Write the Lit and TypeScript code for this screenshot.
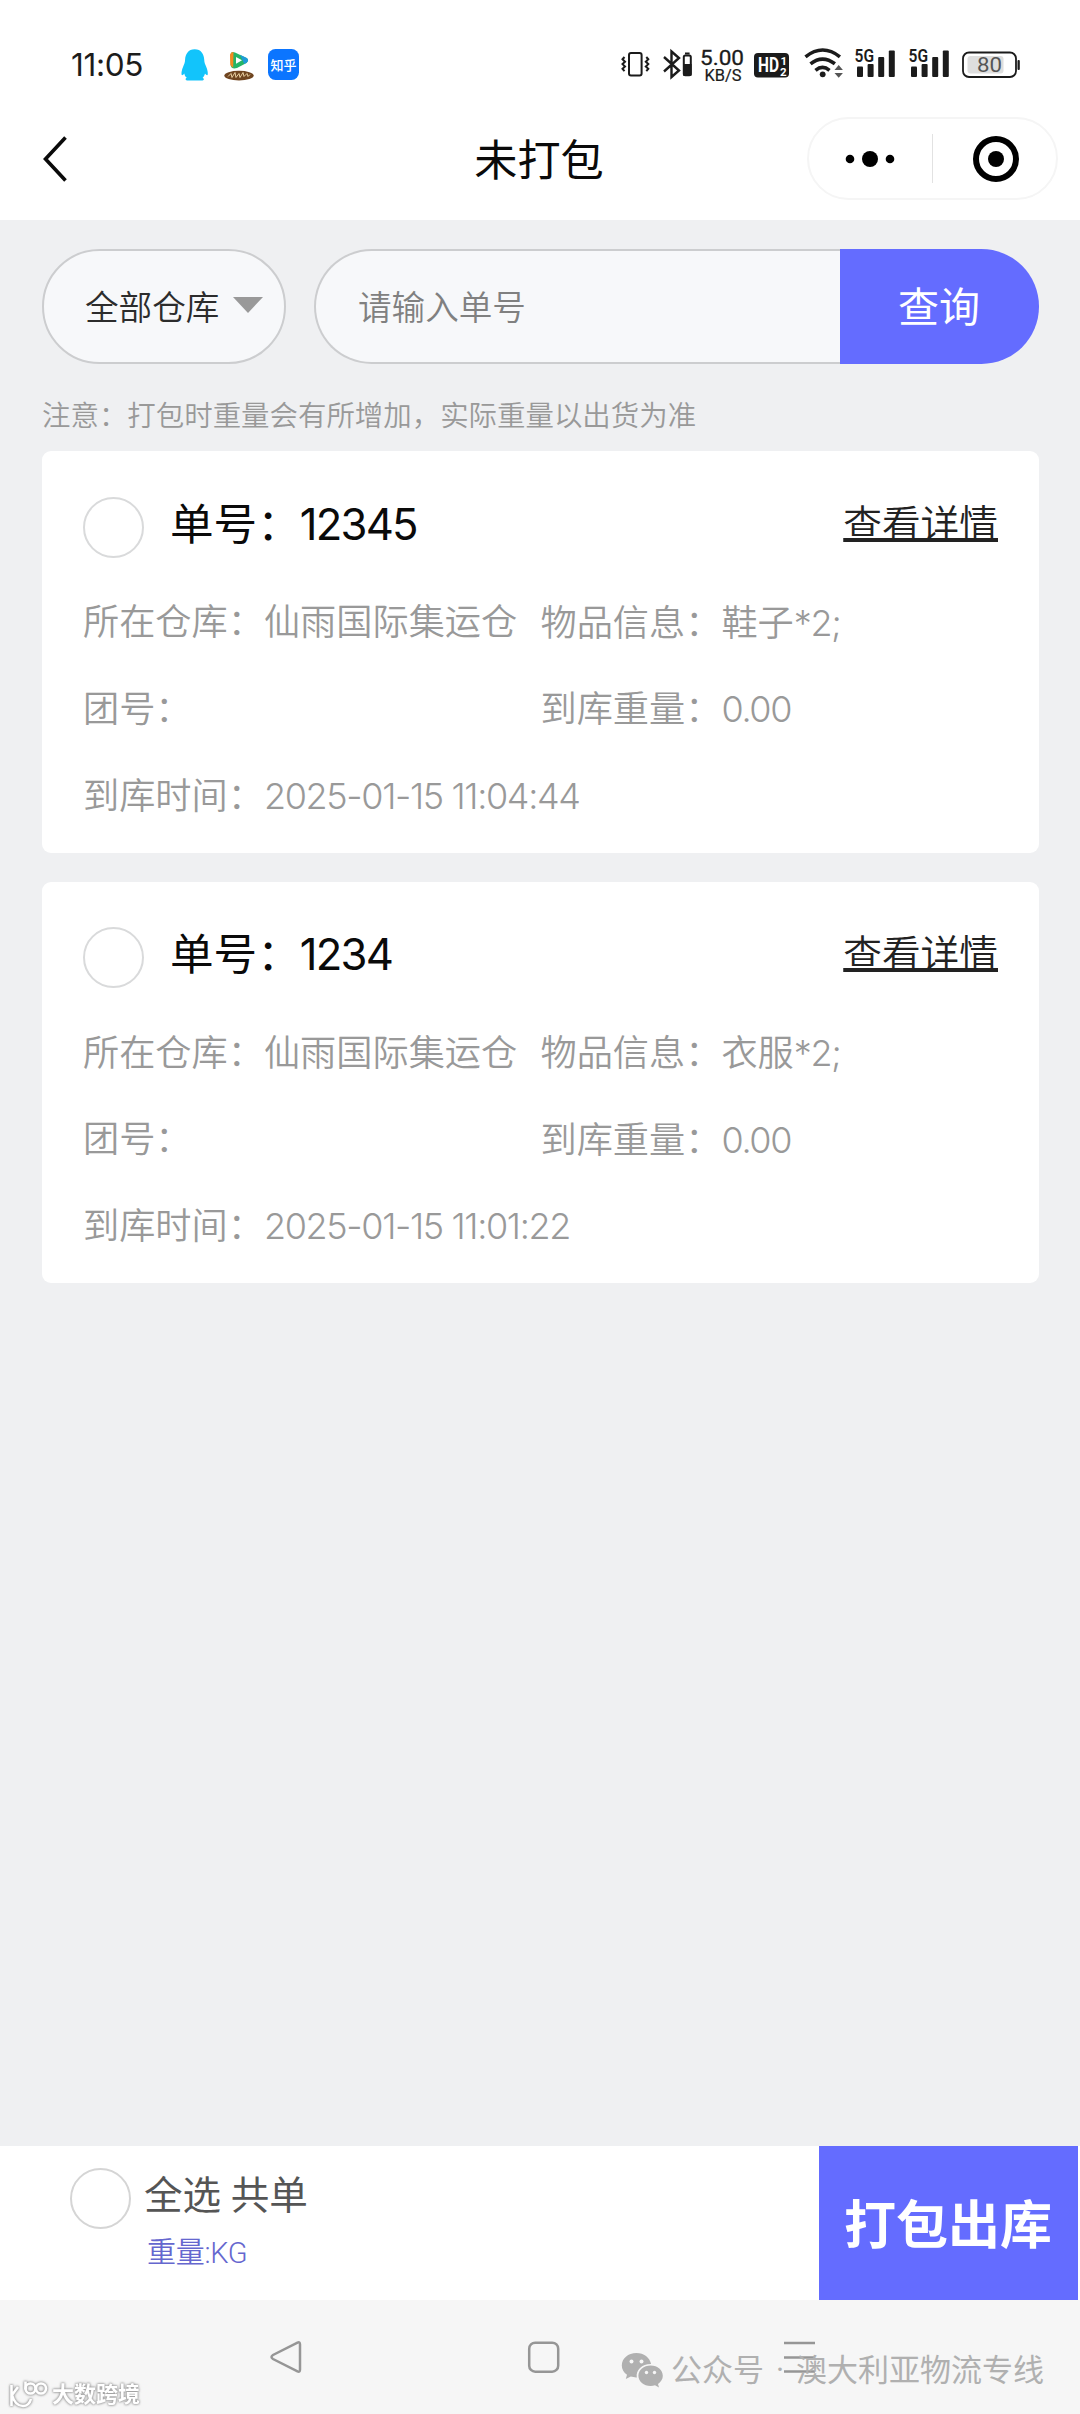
import { LitElement, html, svg, css } from "lit";
import { customElement, property } from "lit/decorators.js";

interface Parcel {
  no: string;
  warehouse: string;
  goods: string;
  group: string;
  weight: string;
  time: string;
}

const PARCELS: Parcel[] = [
  { no: "12345", warehouse: "仙雨国际集运仓", goods: "鞋子*2;", group: "", weight: "0.00", time: "2025-01-15 11:04:44" },
  { no: "1234", warehouse: "仙雨国际集运仓", goods: "衣服*2;", group: "", weight: "0.00", time: "2025-01-15 11:01:22" },
];

@customElement("status-bar")
class StatusBar extends LitElement {
  static styles = css`
    :host { display: flex; height: 98px; box-sizing: border-box; padding: 40px 55px 0 70px; align-items: flex-start; justify-content: space-between; }
    .left { display: flex; align-items: center; height: 50px; }
    .time { width: 110px; padding-left: 1px; font-family: Inter, Roboto, sans-serif; font-size: 31.500px; font-weight: 400; line-height: 52px; color: #1c1c1c; letter-spacing: -.300px; }
    svg { display: block; }
    text { font-family: Roboto, "Liberation Sans", sans-serif; }
    .zh { font-family: "Noto Sans CJK SC", sans-serif; }
  `;

  private signal(x: number) {
    return svg`<g transform="translate(${x} 0)" fill="#1b1b1b">
      <text x="-0.5" y="62" font-size="18.500" font-weight="600" textLength="19.500" lengthAdjust="spacingAndGlyphs">5G</text>
      <rect x="2" y="66.500" width="6" height="10.500" rx="1"/>
      <rect x="12.600" y="64" width="6" height="13" rx="1"/>
      <rect x="23.200" y="57" width="6" height="20" rx="1"/>
      <rect x="33.800" y="50.500" width="6" height="26.500" rx="1"/>
    </g>`;
  }

  render() {
    return html`
      <div class="left">
        <span class="time">11:05</span>
        <svg width="120" height="50" viewBox="181 40 120 50">
          <path fill="#12c4fb" d="M194.700 49.300c-6.500 0-9.300 5-9.600 10.200-.1 3-.8 4.500-2 7.200-1.300 3-1.900 6-1.500 8 .4 1 1.600.2 2.700-1.200.4 2.300 1.300 3.300 2.500 4.300-1.600.5-1.700 2.600.2 2.600h15.500c2 0 1.600-2.100.1-2.700 1.100-1 2-2.200 2.400-4.200 1.200 1.400 2.300 2.200 2.700 1.200.4-2-.2-5-1.500-8-1.200-2.700-1.900-4.200-2-7.200-.300-5.200-3-10.200-9.500-10.200z"/>
          <path fill="#25b566" d="M230.500 54.500q.6-3.500 4.500-2l11.500 5.500q3 2 0 5l-9.500 5q-5.500 1.500-6.300-2.500z"/>
          <path fill="#f48a21" d="M230 55q.8-3.200 3.500-3l-.3 15.800q-2.400-.8-2.900-3.500z"/>
          <path fill="#1e9bd8" d="M240 54.700l6.800 3.300q2.600 2.200 0 4.600l-2.500 1.400z"/>
          <path fill="#fff" d="M236 57l6 3.300-6 3.500z"/>
          <ellipse cx="239" cy="75.600" rx="14.700" ry="4.900" fill="#6f4520"/>
          <path d="M228 76.500l3-3 1 4 3-5 1 5 3-4 1 4 3-5 1 4 3-3 1 3 2-2" fill="none" stroke="#e8cfa0" stroke-width="1"/>
          <rect x="268" y="49" width="31" height="31" rx="7.500" fill="#0b75ff"/>
          <text class="zh" x="283.500" y="69.500" font-size="13" font-weight="500" fill="#fff" text-anchor="middle">知乎</text>
        </svg>
      </div>
      <svg width="405" height="50" viewBox="620 40 405 50">
        <g fill="none" stroke="#1b1b1b" stroke-width="2">
          <rect x="629" y="53" width="12.600" height="22.500" rx="2"/>
          <path stroke-width="2" d="M624.500 57l-2 2.300 2.500 2.400-2.500 2.400 2.500 2.400-2.500 2.400 2 2.300M646.300 57l2 2.300-2.500 2.400 2.500 2.400-2.500 2.400 2.500 2.400-2 2.300"/>
          <path stroke-width="2.400" d="M664 57l15 13.500-7.500 6.500v-25.500l7.500 6.500-15 13.500"/>
          <rect x="683.800" y="55.600" width="7" height="19.600" rx="1.500"/>
        </g>
        <path fill="#1b1b1b" d="M683 64h8.600v11.500h-8.600zM685 52.600h4.600v2h-4.600z"/>
        <g fill="#1b1b1b">
          <text x="700" y="65" font-size="20.500" font-weight="400" stroke="#1b1b1b" stroke-width=".3" textLength="44" lengthAdjust="spacingAndGlyphs">5.00</text>
          <text x="704.500" y="81.300" font-size="16" font-weight="400" stroke="#1b1b1b" stroke-width=".2" textLength="37" lengthAdjust="spacingAndGlyphs">KB/S</text>
        </g>
        <rect x="754" y="53" width="35" height="24.500" rx="4" fill="#1b1b1b"/>
        <g fill="#fff" font-weight="700">
          <text x="758" y="72" font-size="19.500" textLength="21" lengthAdjust="spacingAndGlyphs">HD</text>
          <text x="780.500" y="64.500" font-size="11.500">1</text>
          <text x="780" y="75.500" font-size="11.500">2</text>
        </g>
        <g fill="none" stroke="#1b1b1b" stroke-width="3.600">
          <path d="M805.500 56.800q17.200-13.600 34.400 0"/>
          <path d="M810.500 63.800q12-9.500 24.400 0"/>
          <path d="M815.500 70.300q7-5.800 14 0"/>
        </g>
        <circle cx="822.700" cy="74.300" r="2.900" fill="#1b1b1b"/>
        <path fill="#555" d="M834.500 70l4.200-5 4.200 5zM834.500 73l4.200 4.800 4.200-4.800z"/>
        ${this.signal(855)} ${this.signal(909)}
        <rect x="963" y="52.500" width="53" height="24.500" rx="6" fill="#fff" stroke="#1b1b1b" stroke-width="1.800"/>
        <rect x="967.500" y="56" width="36" height="17.500" rx="3" fill="#dedede"/>
        <text x="977" y="72" font-size="21" font-weight="400" fill="#555" textLength="25" lengthAdjust="spacingAndGlyphs">80</text>
        <rect x="1017.500" y="60" width="2.300" height="10" rx="1" fill="#1b1b1b"/>
      </svg>
    `;
  }
}

@customElement("title-bar")
class TitleBar extends LitElement {
  static styles = css`
    :host { display: grid; grid-template-columns: 1fr auto 1fr; align-items: center; height: 122px; box-sizing: border-box; padding: 0 22px 1px 40px; color: #0a0a0a; }
    .title { font-size: 43.200px; font-weight: 400; line-height: 60px; padding: 6px 20px 0 0; }
    .capsule { justify-self: end; display: flex; align-items: center; width: 251px; height: 83px; box-sizing: border-box; border: 2px solid #f5f5f5; border-radius: 42px; }
    .half { flex: 1; display: flex; align-items: center; justify-content: center; }
    .left-half { padding-right: 2px; }
    .right-half { padding-left: 2px; }
    .split { width: 1px; height: 49px; background: #e2e2e2; }
    svg { display: block; }
  `;

  render() {
    return html`
      <svg width="30" height="50" viewBox="0 0 30 50"><path d="M25.500 3.500L5.500 25l20 21.500" fill="none" stroke="#0a0a0a" stroke-width="3.600"/></svg>
      <div class="title">未打包</div>
      <div class="capsule">
        <div class="half left-half"><svg width="50" height="18" viewBox="0 0 50 18"><circle cx="5" cy="9" r="4.300"/><circle cx="25" cy="9" r="8"/><circle cx="45" cy="9" r="4.300"/></svg></div>
        <div class="split"></div>
        <div class="half right-half"><svg width="48" height="48" viewBox="0 0 48 48"><circle cx="24" cy="24" r="20" fill="none" stroke="#000" stroke-width="6"/><circle cx="24" cy="24" r="8"/></svg></div>
      </div>
    `;
  }
}

@customElement("search-row")
class SearchRow extends LitElement {
  static styles = css`
    :host { display: flex; gap: 28px; height: 115px; }
    .select, .input { box-sizing: border-box; border: 2px solid #cccdcf; background: #f7f8fa; display: flex; align-items: center; font-size: 33.600px; padding-bottom: 3px; }
    .select { width: 244px; border-radius: 58px; padding-left: 41px; gap: 14px; color: #2c2c2c; }
    .arrow { width: 0; height: 0; border: 15.500px solid transparent; border-top: 16px solid #999; border-bottom: 0; }
    .field { flex: 1; display: flex; }
    .input { flex: 1; border-right: 0; border-radius: 58px 0 0 58px; padding-left: 42px; color: #808080; }
    .go { width: 199px; box-sizing: border-box; padding: 0 1px 6px 0; border-radius: 0 58px 58px 0; background: #646cff; color: #fff; font-size: 41px; font-weight: 400; display: flex; align-items: center; justify-content: center; }
  `;

  render() {
    return html`
      <div class="select"><span>全部仓库</span><i class="arrow"></i></div>
      <div class="field">
        <div class="input">请输入单号</div>
        <div class="go">查询</div>
      </div>
    `;
  }
}

@customElement("parcel-card")
class ParcelCard extends LitElement {
  @property({ attribute: false }) parcel!: Parcel;

  static styles = css`
    :host { display: block; box-sizing: border-box; height: 401.500px; padding: 45px 41px 0; border-radius: 9px; background: #fff; }
    .head { display: flex; align-items: center; height: 62px; }
    .check { width: 61px; height: 61px; box-sizing: border-box; border: 2px solid #d9dadb; border-radius: 50%; }
    .no { margin: 0 0 3px 26px; flex: 1; font-size: 43.600px; font-weight: 400; line-height: 60px; color: #0a0a0a; display: flex; }
    .digits, .latin { font-family: Inter, Roboto, sans-serif; }
    .digits { letter-spacing: -1.800px; margin: -1px 0 0 -1px; font-weight: 400; }
    .link { margin-bottom: 5px; font-size: 38.700px; line-height: 56px; color: #222; text-decoration: underline; text-decoration-thickness: 3.500px; text-underline-offset: 0; text-decoration-skip-ink: none; }
    .grid { display: grid; grid-template-columns: 457.500px 1fr; grid-auto-rows: 86.500px; align-items: center; margin-top: 22px; font-size: 36.200px; line-height: 52px; color: #999; }
    .wide { grid-column: 1 / -1; }
    .latin { font-size: 36px; letter-spacing: -1.350px; }
  `;

  render() {
    const p = this.parcel;
    const goods = p.goods.replace(/\*.*$/, "");
    const count = p.goods.slice(goods.length);
    return html`
      <div class="head">
        <span class="check"></span>
        <div class="no"><span>单号：</span><span class="digits">${p.no}</span></div>
        <span class="link">查看详情</span>
      </div>
      <div class="grid">
        <div>所在仓库：${p.warehouse}</div>
        <div>物品信息：${goods}<span class="latin">${count}</span></div>
        <div>团号：${p.group}</div>
        <div>到库重量：<span class="latin">${p.weight}</span></div>
        <div class="wide">到库时间：<span class="latin">${p.time}</span></div>
      </div>
    `;
  }
}

@customElement("pack-bar")
class PackBar extends LitElement {
  static styles = css`
    :host { display: flex; height: 154px; box-sizing: border-box; padding: 0 2px 0 70px; background: #fff; }
    .check { width: 61px; height: 61px; margin-top: 22px; box-sizing: border-box; border: 2px solid #d5d5d5; border-radius: 50%; }
    .info { flex: 1; padding: 22px 0 0 13px; }
    .all { font-size: 38.600px; line-height: 56px; color: #555; font-weight: 400; }
    .kg { margin: 8px 0 0 3px; font-size: 29px; line-height: 42px; color: #6567cf; letter-spacing: -0.300px; }
    .pack { width: 259px; box-sizing: border-box; padding: 0 1px 3px 0; background: #646cff; color: #fff; font-size: 52px; font-weight: 700; display: flex; align-items: center; justify-content: center; }
  `;

  render() {
    return html`
      <span class="check"></span>
      <div class="info">
        <div class="all">全选 共单</div>
        <div class="kg">重量:KG</div>
      </div>
      <div class="pack">打包出库</div>
    `;
  }
}

@customElement("nav-bar")
class NavBar extends LitElement {
  static styles = css`
    :host { position: relative; display: flex; height: 114px; box-sizing: border-box; padding: 40px 263px 0 269px; justify-content: space-between; background: #f6f6f6; }
    svg { display: block; }
    .account { position: absolute; left: 621px; top: 47px; display: flex; align-items: center; height: 46px; font-size: 31px; line-height: 46px; color: #b0b0b0; font-weight: 400; white-space: pre; }
    .account span { margin-left: 8px; padding-top: 2px; }
    .account .dot { width: 32px; margin: 0; text-align: center; }
    .account .name { margin: 0; }
    .brand { position: absolute; left: 8px; top: 78px; display: flex; align-items: center; font-size: 22px; font-weight: 700; line-height: 34px; color: #fff; filter: drop-shadow(0 0 1px #999) drop-shadow(0 0 1px #aaa); }
    .brand span { margin-left: 4px; }
  `;

  render() {
    return html`
      <svg width="34" height="34" viewBox="0 0 34 34"><path d="M28.500 2.600Q31 1.500 31 4.500v25q0 3-2.500 1.900L4 19q-3-2 0-4z" fill="none" stroke="#969696" stroke-width="2.500"/></svg>
      <svg width="34" height="34" viewBox="-1 0 34 34"><rect x="2.200" y="2.700" width="29" height="29" rx="6" fill="none" stroke="#969696" stroke-width="2.500"/></svg>
      <svg width="34" height="34" viewBox="0 0 34 34"><path d="M1 3h31M1 17.500h31M1 31.500h31" stroke="#969696" stroke-width="2.500"/></svg>
      <div class="account">
        <svg width="42" height="36" viewBox="0 0 42 36">
          <path fill="#b0b0b0" d="M15.500 1C7 1 .800 6.500.800 13.500c0 4 2 7 5.200 9.300L4.800 27l5-2.400c2 .6 4 .9 6 .8-1.200-7.500 5.500-13.600 14.300-13.400C28.800 5.500 22.800 1 15.500 1z"/>
          <path fill="#b0b0b0" d="M29.700 13.500c-7 0-12.300 4.600-12.300 10.300s5.300 10.200 12.300 10.200c1.500 0 3-.2 4.300-.7l4 2.200-1-3.600c3-2 4.800-4.800 4.800-8.100 0-5.700-5.200-10.300-12.100-10.300z"/>
          <g fill="#f6f6f6"><circle cx="10.500" cy="9.500" r="2"/><circle cx="20.500" cy="9.500" r="2"/><circle cx="25.500" cy="20.500" r="1.700"/><circle cx="33.500" cy="20.500" r="1.700"/></g>
        </svg>
        <span>公众号</span><span class="dot">·</span><span class="name">澳大利亚物流专线</span>
      </div>
      <div class="brand">
        <svg width="40" height="30" viewBox="0 0 40 30"><g fill="none" stroke="#fff" stroke-width="2.600"><path d="M3.500 5v21M10 7l-6 8q3 11 11 11 6 0 8-7"/><path d="M17.500 1.500v8"/><circle cx="22.500" cy="8.500" r="5"/><circle cx="33" cy="8.500" r="5"/></g></svg>
        <span>大数跨境</span>
      </div>
    `;
  }
}

@customElement("app-root")
class AppRoot extends LitElement {
  static styles = css`
    :host { display: flex; flex-direction: column; width: 1080px; height: 2414px; overflow: hidden; background: #eff0f2; font-family: Roboto, "Noto Sans CJK SC", sans-serif; font-weight: 350; }
    .top { background: #fff; }
    .body { flex: 1; padding: 29px 41px 0 42px; }
    .notice { margin: 32px 0 14px; font-size: 28.450px; line-height: 41px; color: #999; white-space: nowrap; }
    .list { display: flex; flex-direction: column; gap: 29px; }
  `;

  render() {
    return html`
      <div class="top"><status-bar></status-bar><title-bar></title-bar></div>
      <div class="body">
        <search-row></search-row>
        <div class="notice">注意：打包时重量会有所增加，实际重量以出货为准</div>
        <div class="list">${PARCELS.map((p) => html`<parcel-card .parcel=${p}></parcel-card>`)}</div>
      </div>
      <pack-bar></pack-bar>
      <nav-bar></nav-bar>
    `;
  }
}
